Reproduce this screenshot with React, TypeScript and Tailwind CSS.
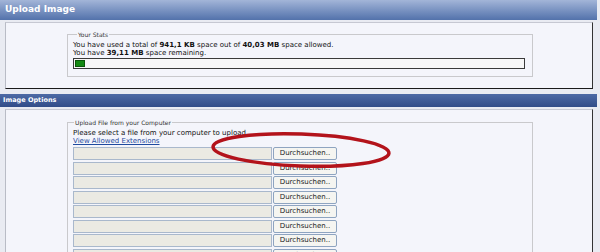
import React from "react";

const rows = [0, 1, 2, 3, 4, 5, 6, 7];

const FileRow = () => (
  <div className="flex items-center gap-[1px] h-[13px] shrink-0">
    <div className="w-[199px] h-[13px] bg-[#ebeae3] border border-[#a9b8cc]" />
    <button className="w-[64px] h-[13px] bg-[#f5f5f1] border border-[#8ea4c0] rounded-[2px] text-[7px] leading-[11px] text-[#222] font-['DejaVu_Sans',sans-serif] text-center">
      Durchsuchen..
    </button>
  </div>
);

export default function App() {
  return (
    <div className="relative w-[600px] h-[252px] overflow-hidden bg-[#e9ebf2] font-['DejaVu_Sans',sans-serif] text-[#111]">
      <div className="w-[597px]">
        {/* Upload Image */}
        <div className="h-[20px] bg-gradient-to-b from-[#a3b5d8] to-[#5372ab] flex items-center pl-[5px] text-white font-bold text-[9px]">
          Upload Image
        </div>
        <div className="h-[2px]" />
        <div className="ml-[5px] mr-[4px] h-[67px] bg-[#f4f5fb] border-t border-t-[#c6c8d2] border-l border-l-[#b9bcc6] border-r border-r-[#333] border-b border-b-[#1a1a1a] pl-[61px] pt-[8px]">
          <fieldset className="w-[466px] border border-[#c9c9cc] px-[5px] pb-[7px]">
            <legend className="ml-[4px] px-[1px] text-[6px] leading-[7px] text-[#333]">
              Your Stats
            </legend>
            <div className="pt-[3px] text-[7px] leading-[8px]">
              <div>
                You have used a total of <b>941,1 KB</b> space out of{" "}
                <b>40,03 MB</b> space allowed.
              </div>
              <div>
                You have <b>39,11 MB</b> space remaining.
              </div>
            </div>
            <div className="w-[452px] h-[11px] mt-[1px] border border-[#3a3a3a] bg-[#f7f7f7] p-[1px]">
              <div className="w-[10px] h-full bg-[#138a13] border border-[#0a560a]" />
            </div>
          </fieldset>
        </div>

        {/* Image Options */}
        <div className="h-[5px]" />
        <div className="h-[13px] bg-gradient-to-b from-[#4d6aa5] to-[#314c88] flex items-center pl-[3px] text-white font-bold text-[6.5px]">
          Image Options
        </div>
        <div className="h-[2px]" />
        <div className="ml-[5px] mr-[4px] h-[200px] bg-[#f4f5fb] border-t border-t-[#c6c8d2] border-l border-l-[#b9bcc6] border-r border-r-[#333] pl-[61px] pt-[9px]">
          <fieldset className="w-[466px] h-[180px] border border-[#c9c9cc] px-[5px]">
            <legend className="ml-[1px] px-[1px] text-[6px] leading-[7px] text-[#333]">
              Upload File from your Computer
            </legend>
            <div className="pt-[3px] text-[7px] leading-[8px]">
              <div>Please select a file from your computer to upload.</div>
              <div className="text-[#1f4a9e] underline">View Allowed Extensions</div>
            </div>
            <div className="flex flex-col gap-[1.5px] mt-[2px]">
              {rows.map((r) => (
                <FileRow key={r} />
              ))}
            </div>
          </fieldset>
        </div>
      </div>

      {/* red marker ellipse */}
      <svg
        className="absolute left-[205px] top-[125px] pointer-events-none"
        width="195"
        height="50"
        viewBox="0 0 195 50"
      >
        <ellipse
          cx="96"
          cy="25"
          rx="88"
          ry="16"
          transform="rotate(2 96 25)"
          fill="none"
          stroke="#b3131b"
          strokeWidth="3.5"
        />
      </svg>
    </div>
  );
}
